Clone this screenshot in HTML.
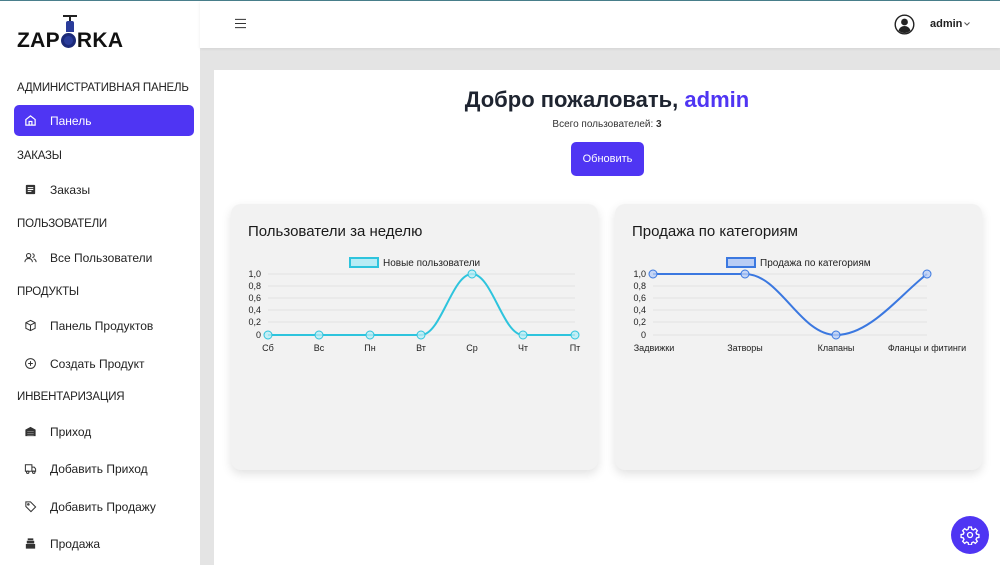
<!DOCTYPE html>
<html><head><meta charset="utf-8"><style>
*{box-sizing:border-box;margin:0;padding:0}
body{width:1000px;height:565px;overflow:hidden;font-family:"Liberation Sans","DejaVu Sans",sans-serif;background:#e4e4e4;position:relative;color:#222}
.top{position:absolute;left:0;top:0;width:1000px;height:1px;background:#4a7f8c}
.sb{position:absolute;left:0;top:1px;width:200px;height:564px;background:#fff}
.hdr{position:absolute;left:200px;top:1px;width:800px;height:47px;background:#fff;box-shadow:0 1px 3px rgba(0,0,0,.08)}
.main{position:absolute;left:214px;top:70px;width:786px;height:495px;background:#fff}
.h{position:absolute;left:17px;font-size:11.5px;color:#222;white-space:nowrap;letter-spacing:-.2px}
.it{position:absolute;left:50px;font-size:12px;color:#222;white-space:nowrap}
.ic{position:absolute;left:24px;width:13px;height:13px}
.act{position:absolute;left:14px;top:104px;width:180px;height:31px;background:#4f35f3;border-radius:5px}
.card{position:absolute;top:204px;width:367px;height:266px;background:#f2f2f2;border-radius:10px;box-shadow:0 4px 10px rgba(0,0,0,.12)}
.card h3{position:absolute;left:17px;top:19px;font-size:15px;font-weight:normal;color:#1a1a1a}
svg text{font-family:"Liberation Sans",sans-serif}
</style></head><body>
<div class="top"></div>
<div class="sb">
 <div style="position:absolute;left:17px;top:28px;font-size:21px;font-weight:bold;letter-spacing:.3px;color:#111">ZAP<span style="display:inline-block;width:15px;height:15px;border-radius:50%;background:#2a3c9a;border:3px solid #1c2a78;vertical-align:-1px;margin:0 1px"></span>RKA</div>
 <div style="position:absolute;left:63px;top:14px;width:14px;height:2px;background:#222"></div>
 <div style="position:absolute;left:69px;top:15px;width:2px;height:6px;background:#222"></div>
 <div style="position:absolute;left:66px;top:20px;width:8px;height:11px;background:#2a3c9a;border-radius:2px 2px 0 0"></div>
 <div class="h" style="top:81px">АДМИНИСТРАТИВНАЯ ПАНЕЛЬ</div>
 <div class="act"></div>
 <svg class="ic" style="top:113px" viewBox="0 0 14 14" fill="none" stroke="#fff" stroke-width="1.3"><path d="M2 6L7 2l5 4v6H2z M5.5 12V8h3v4"/></svg>
 <div class="it" style="top:113px;color:#fff">Панель</div>
 <div class="h" style="top:149px">ЗАКАЗЫ</div>
 <svg class="ic" style="top:182px" viewBox="0 0 14 14"><rect x="2" y="2" width="10" height="10" rx="1" fill="#333"/><path d="M4 5h6M4 7h6M4 9h4" stroke="#fff" stroke-width="1"/></svg>
 <div class="it" style="top:182px">Заказы</div>
 <div class="h" style="top:217px">ПОЛЬЗОВАТЕЛИ</div>
 <svg class="ic" style="top:250px" viewBox="0 0 14 14" fill="none" stroke="#333" stroke-width="1.1"><circle cx="5" cy="5" r="2.3"/><path d="M1 12c0-2.5 2-4 4-4s4 1.5 4 4M9 3a2 2 0 010 4M10.5 8.5c1.5.5 2.5 1.7 2.5 3.5"/></svg>
 <div class="it" style="top:250px">Все Пользователи</div>
 <div class="h" style="top:285px">ПРОДУКТЫ</div>
 <svg class="ic" style="top:318px" viewBox="0 0 14 14" fill="none" stroke="#333" stroke-width="1.1"><path d="M7 1.5l5 2.5v6l-5 2.5-5-2.5V4z M2 4l5 2.5L12 4 M7 6.5v6"/></svg>
 <div class="it" style="top:318px">Панель Продуктов</div>
 <svg class="ic" style="top:356px" viewBox="0 0 14 14" fill="none" stroke="#333" stroke-width="1.1"><circle cx="7" cy="7" r="5.3"/><path d="M7 4.5v5M4.5 7h5"/></svg>
 <div class="it" style="top:356px">Создать Продукт</div>
 <div class="h" style="top:390px">ИНВЕНТАРИЗАЦИЯ</div>
 <svg class="ic" style="top:424px" viewBox="0 0 14 14"><path d="M1.5 12V5l5.5-3 5.5 3v7z" fill="#333"/><path d="M3.5 7h7M3.5 9h7M3.5 11h7" stroke="#888" stroke-width=".8"/></svg>
 <div class="it" style="top:424px">Приход</div>
 <svg class="ic" style="top:461px" viewBox="0 0 14 14" fill="none" stroke="#333" stroke-width="1.1"><path d="M1.5 3h7v7h-7z M8.5 5.5h2.5l1.5 2V10h-4"/><circle cx="4" cy="11" r="1.3"/><circle cx="10.5" cy="11" r="1.3"/></svg>
 <div class="it" style="top:461px">Добавить Приход</div>
 <svg class="ic" style="top:499px" viewBox="0 0 14 14" fill="none" stroke="#333" stroke-width="1.1"><path d="M2 2h5l5.5 5.5-5 5L2 7z"/><circle cx="4.7" cy="4.7" r=".8"/></svg>
 <div class="it" style="top:499px">Добавить Продажу</div>
 <svg class="ic" style="top:536px" viewBox="0 0 14 14"><path d="M4 1.5h6v2H4z M3 4h8v3H3z M2 7.5h10v5H2z" fill="#333"/></svg>
 <div class="it" style="top:536px">Продажа</div>
</div>
<div class="hdr">
 <svg style="position:absolute;left:35px;top:17px" width="11" height="11" viewBox="0 0 12 11" stroke="#333" stroke-width="1.2"><path d="M0 1h12M0 5.5h12M0 10h12"/></svg>
 <svg style="position:absolute;left:694px;top:13px" width="21" height="21" viewBox="0 0 21 21"><circle cx="10.5" cy="10.5" r="9.3" fill="#fff" stroke="#222" stroke-width="1.4"/><circle cx="10.5" cy="8" r="3.4" fill="#222"/><path d="M4.5 16.5c1-3 3.5-4.5 6-4.5s5 1.5 6 4.5c-1.5 1.5-3.5 2.5-6 2.5s-4.5-1-6-2.5z" fill="#222"/></svg>
 <div style="position:absolute;left:730px;top:17px;font-size:11px;font-weight:bold;color:#222">admin</div>
 <svg style="position:absolute;left:764px;top:21px" width="6" height="4" viewBox="0 0 6 4" fill="none" stroke="#555" stroke-width="1"><path d="M.5.5L3 3 5.5.5"/></svg>
</div>
<div class="main">
 <div style="position:absolute;left:0;width:786px;top:17px;text-align:center;font-size:22px;font-weight:bold;color:#1e2430">Добро пожаловать, <span style="color:#4f35f3">admin</span></div>
 <div style="position:absolute;left:0;width:786px;top:49px;text-align:center;font-size:10px;color:#333">Всего пользователей: <b>3</b></div>
 <div style="position:absolute;left:357px;top:72px;width:73px;height:34px;background:#4f35f3;border-radius:5px;color:#fff;font-size:11px;text-align:center;line-height:34px">Обновить</div>
</div>
<div class="card" style="left:231px"><h3>Пользователи за неделю</h3></div>
<div class="card" style="left:615px"><h3>Продажа по категориям</h3></div>
<svg style="position:absolute;left:0;top:0" width="1000" height="565">
 <g font-size="9" fill="#222">
  <g stroke="#e2e2e2" stroke-width="1">
   <path d="M268 274H575M268 286H575M268 298H575M268 310H575M268 322H575M268 335H575"/>
   <path d="M653 274H927M653 286H927M653 298H927M653 310H927M653 322H927M653 335H927"/>
  </g>
  <g text-anchor="end">
   <text x="261" y="277">1,0</text><text x="261" y="289">0,8</text><text x="261" y="301">0,6</text><text x="261" y="313">0,4</text><text x="261" y="325">0,2</text><text x="261" y="338">0</text>
   <text x="646" y="277">1,0</text><text x="646" y="289">0,8</text><text x="646" y="301">0,6</text><text x="646" y="313">0,4</text><text x="646" y="325">0,2</text><text x="646" y="338">0</text>
  </g>
  <g text-anchor="middle">
   <text x="268" y="351">Сб</text><text x="319" y="351">Вс</text><text x="370" y="351">Пн</text><text x="421" y="351">Вт</text><text x="472" y="351">Ср</text><text x="523" y="351">Чт</text><text x="575" y="351">Пт</text>
   <text x="654" y="351">Задвижки</text><text x="745" y="351">Затворы</text><text x="836" y="351">Клапаны</text><text x="927" y="351">Фланцы и фитинги</text>
  </g>
  <rect x="350" y="258" width="28" height="9" fill="#b8ecf5" stroke="#2ec4dd" stroke-width="2"/>
  <text x="383" y="266" font-size="10">Новые пользователи</text>
  <rect x="727" y="258" width="28" height="9" fill="#b9cdf5" stroke="#3b78e0" stroke-width="2"/>
  <text x="760" y="266" font-size="10">Продажа по категориям</text>
 </g>
 <path d="M268 335H421C441 335 452 274 472 274C492 274 503 335 523 335H575" fill="none" stroke="#2ec4dd" stroke-width="2"/>
 <g fill="#b8ecf5" fill-opacity=".8" stroke="#2ec4dd" stroke-width="1">
  <circle cx="268" cy="335" r="4"/><circle cx="319" cy="335" r="4"/><circle cx="370" cy="335" r="4"/><circle cx="421" cy="335" r="4"/><circle cx="472" cy="274" r="4"/><circle cx="523" cy="335" r="4"/><circle cx="575" cy="335" r="4"/>
 </g>
 <path d="M653 274H745C780 274 800 335 836 335C870 335 900 295 927 274" fill="none" stroke="#3b78e0" stroke-width="2"/>
 <g fill="#b9cdf5" fill-opacity=".8" stroke="#3b78e0" stroke-width="1">
  <circle cx="653" cy="274" r="4"/><circle cx="745" cy="274" r="4"/><circle cx="836" cy="335" r="4"/><circle cx="927" cy="274" r="4"/>
 </g>
</svg>
<div style="position:absolute;left:951px;top:516px;width:38px;height:38px;border-radius:50%;background:#4f35f3"></div>
<svg style="position:absolute;left:960px;top:525px" width="20" height="20" viewBox="0 0 24 24" fill="none" stroke="#fff" stroke-width="1.6"><path d="M10.3 2.5h3.4l.5 2.7 1.9.8 2.3-1.6 2.4 2.4-1.6 2.3.8 1.9 2.7.5v3.4l-2.7.5-.8 1.9 1.6 2.3-2.4 2.4-2.3-1.6-1.9.8-.5 2.7h-3.4l-.5-2.7-1.9-.8-2.3 1.6-2.4-2.4 1.6-2.3-.8-1.9-2.7-.5v-3.4l2.7-.5.8-1.9-1.6-2.3 2.4-2.4 2.3 1.6 1.9-.8z"/><circle cx="12" cy="12" r="3"/></svg>
</body></html>
